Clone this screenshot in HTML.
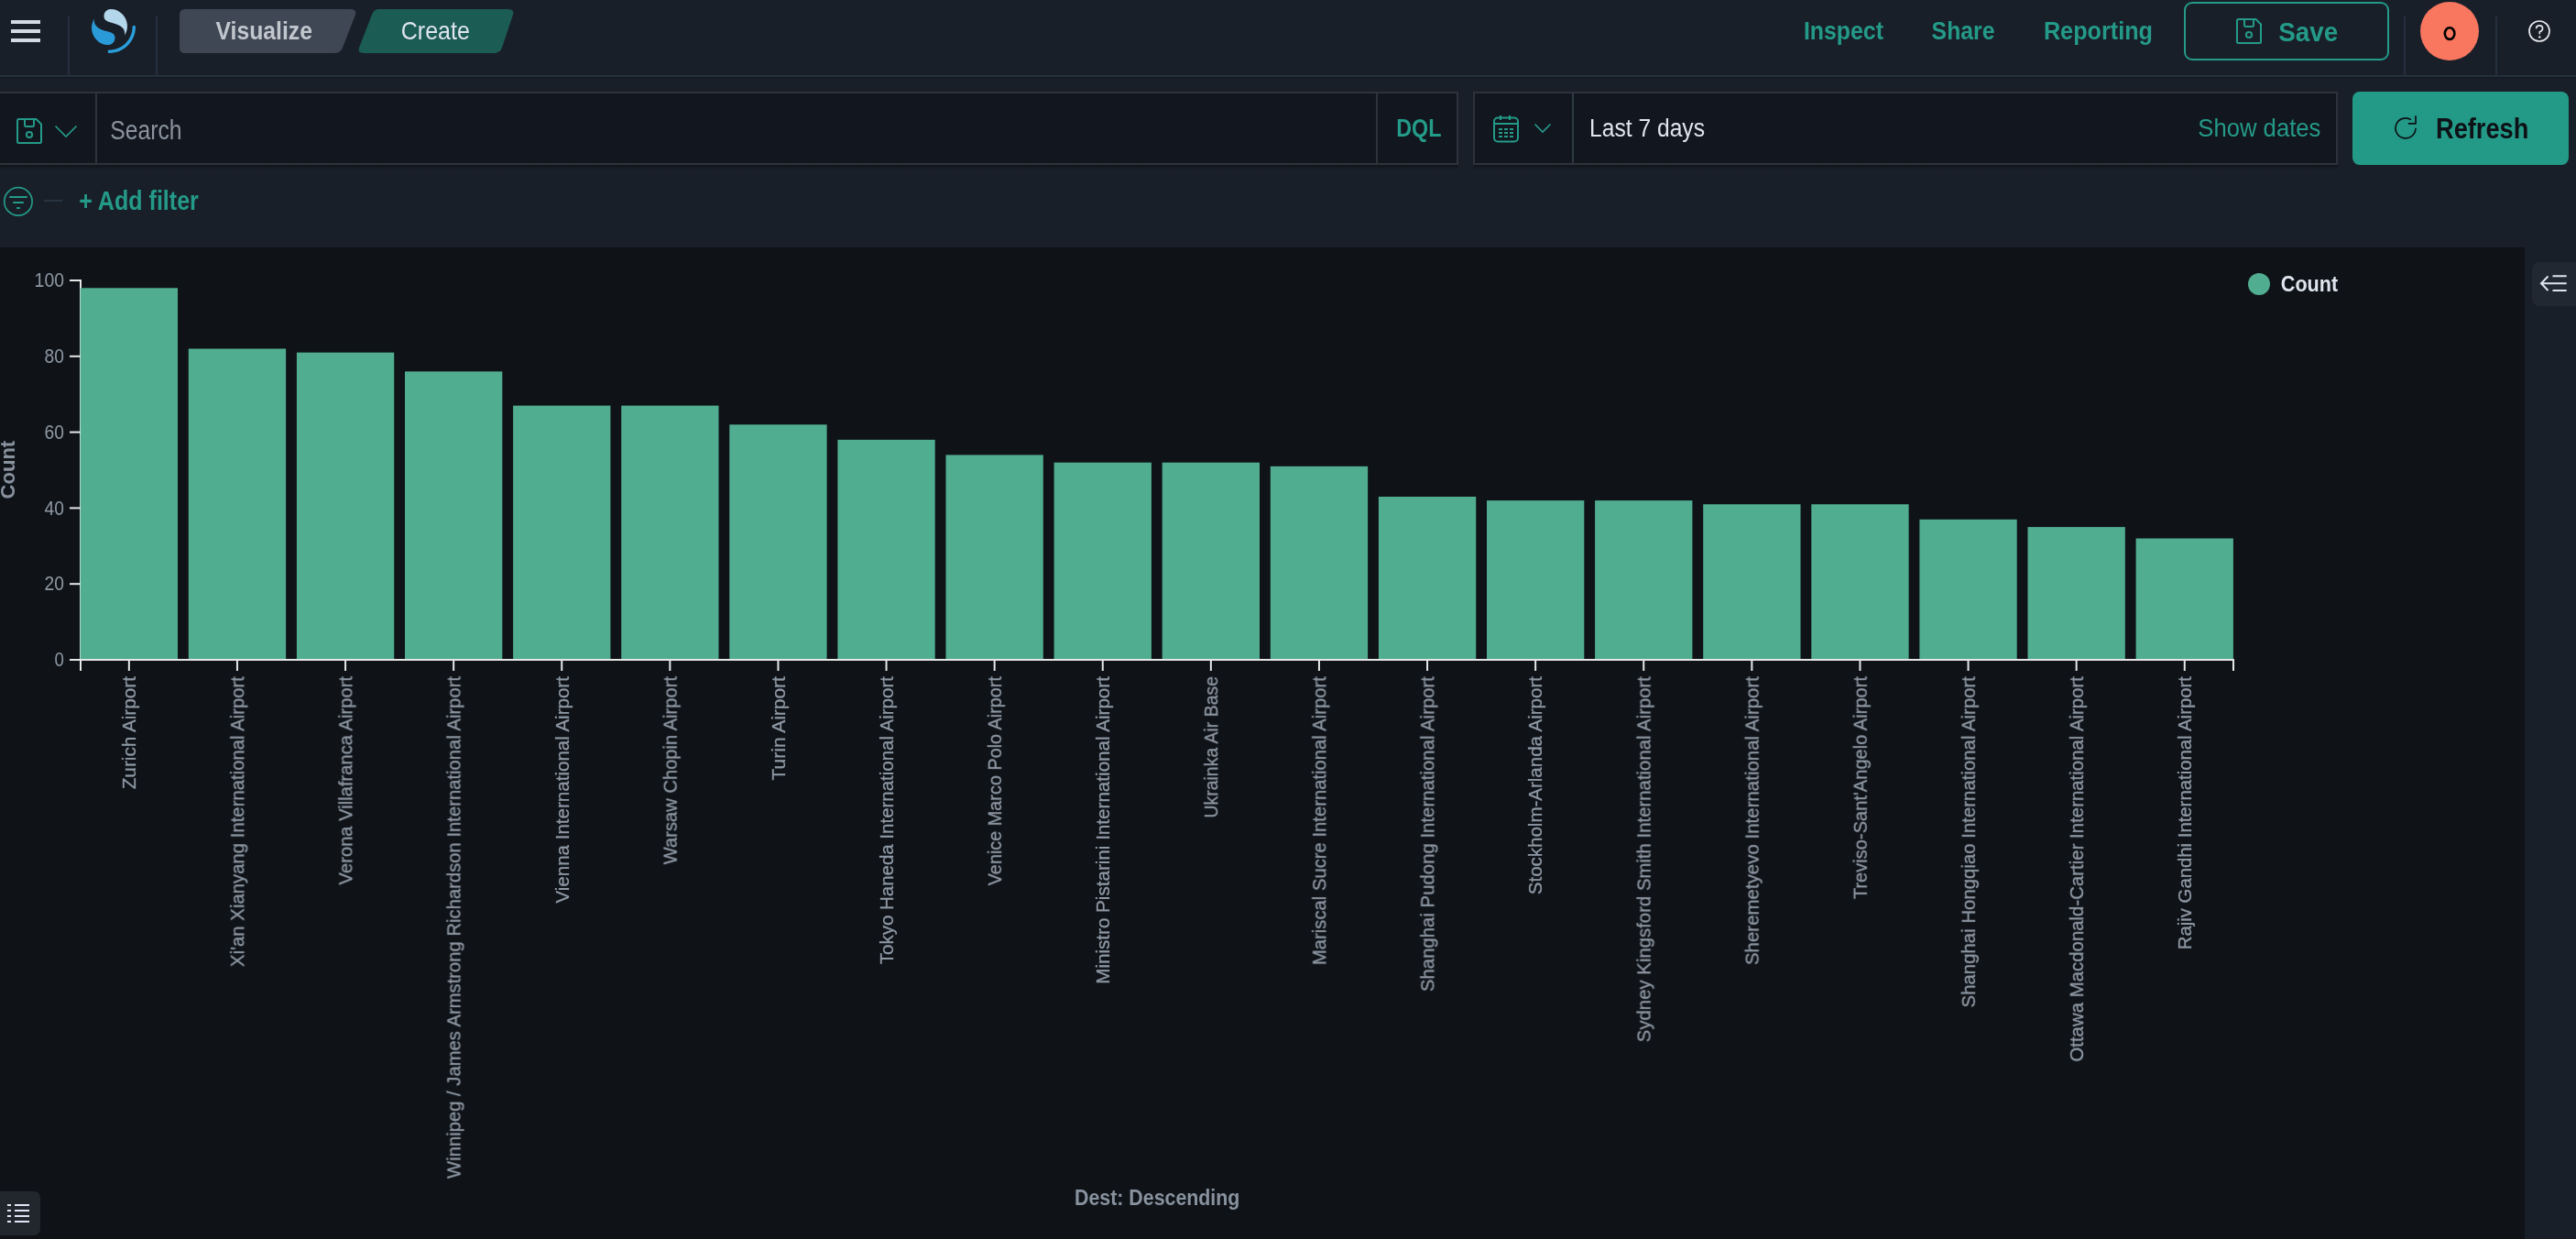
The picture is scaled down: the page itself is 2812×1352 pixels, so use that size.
<!DOCTYPE html>
<html><head><meta charset="utf-8"><title>Visualize</title>
<style>html,body{margin:0;padding:0;background:#0f1318;width:2812px;height:1352px;overflow:hidden;font-family:"Liberation Sans", sans-serif;}</style>
</head><body>
<svg width="2812" height="1352" viewBox="0 0 2812 1352" style="display:block;will-change:transform" font-family='"Liberation Sans", sans-serif'><rect x="0" y="0" width="2812" height="82" fill="#191f29"/>
<rect x="0" y="82" width="2812" height="2" fill="#25303e"/>
<rect x="0" y="84" width="2812" height="186" fill="#191f29"/>
<rect x="0" y="84" width="2812" height="1.3" fill="#13171e"/>
<rect x="0" y="270" width="2756" height="1082" fill="#0f1318"/>
<rect x="2756" y="270" width="56" height="1082" fill="#191f29"/>
<rect x="12" y="22" width="32" height="4" fill="#d4dae5"/>
<rect x="12" y="32" width="32" height="4" fill="#d4dae5"/>
<rect x="12" y="42" width="32" height="4" fill="#d4dae5"/>
<rect x="74" y="18" width="2" height="64" fill="#25303e"/>
<rect x="170" y="18" width="2" height="64" fill="#25303e"/>
<g transform="translate(100,10) scale(0.75)"><path fill="#2a9fdc" d="M61.7374 23.5C60.4878 23.5 59.4748 24.513 59.4748 25.7626C59.4748 44.3813 44.3813 59.4748 25.7626 59.4748C24.513 59.4748 23.5 60.4878 23.5 61.7374C23.5 62.987 24.513 64 25.7626 64C46.8805 64 64 46.8805 64 25.7626C64 24.513 62.987 23.5 61.7374 23.5Z"/><path fill="#b3d6ea" d="M48.0814 38C50.2572 34.4505 52.3615 29.7178 51.9475 23.0921C51.0899 9.36725 38.6589 -1.04463 26.9206 0.0837327C22.3253 0.525465 17.6068 4.2712 18.026 10.9805C18.2082 13.8961 19.6352 15.6169 21.9544 16.9399C24.1618 18.1992 26.9978 18.9969 30.2128 19.9011C34.0962 20.9934 38.6036 22.2203 42.0677 24.7727C46.2191 27.8317 49.0572 31.3774 48.0814 38Z"/><path fill="#2a9bd8" d="M3.91861 14C1.74276 17.5495 -0.361506 22.2822 0.0524931 28.9079C0.910072 42.6327 13.3411 53.0446 25.0794 51.9163C29.6747 51.4745 34.3932 47.7288 33.974 41.0195C33.7918 38.1039 32.3647 36.3831 30.0456 35.0601C27.8382 33.8008 25.0022 33.0031 21.7872 32.0989C17.9038 31.0066 13.3964 29.7797 9.93226 27.2273C5.78088 24.1683 2.94279 20.6226 3.91861 14Z"/></g>
<path d="M202 10 H382 Q390 10 388 16 L374 52 Q372 58 364 58 H202 Q196 58 196 52 V16 Q196 10 202 10Z" fill="#3f4754"/>
<path d="M413 10 H554 Q562 10 560 16 L548 52 Q546 58 538 58 H398 Q390 58 392 52 L406 16 Q408 10 413 10Z" fill="#1b5c55"/>
<text x="235.5" y="43.2" font-size="28.50" fill="#c2c7ce" font-weight="700" text-anchor="start" textLength="105.5" lengthAdjust="spacingAndGlyphs">Visualize</text>
<text x="437.8" y="43.2" font-size="28.50" fill="#dfe5ef" text-anchor="start" textLength="75.0" lengthAdjust="spacingAndGlyphs">Create</text>
<text x="1968.9" y="42.8" font-size="26.80" fill="#249a88" font-weight="700" text-anchor="start" textLength="87.1" lengthAdjust="spacingAndGlyphs">Inspect</text>
<text x="2108.6" y="42.8" font-size="26.80" fill="#249a88" font-weight="700" text-anchor="start" textLength="68.9" lengthAdjust="spacingAndGlyphs">Share</text>
<text x="2230.9" y="42.8" font-size="26.80" fill="#249a88" font-weight="700" text-anchor="start" textLength="119.1" lengthAdjust="spacingAndGlyphs">Reporting</text>
<rect x="2385" y="3" width="222" height="62" rx="8" fill="none" stroke="#249a88" stroke-width="2"/>
<g transform="translate(2441,20)" fill="none" stroke="#249a88" stroke-width="2" stroke-linejoin="round"><path d="M2.5 1 H21.5 L27 6.5 V25.5 Q27 27 25.5 27 H2.5 Q1 27 1 25.5 V2.5 Q1 1 2.5 1 Z"/><path d="M9 1 V7.5 Q9 9 10.5 9 H17.5 Q19 9 19 7.5 V1"/><circle cx="14" cy="18" r="3.1"/></g>
<text x="2487.3" y="45.0" font-size="30.00" fill="#249a88" font-weight="700" text-anchor="start" textLength="64.9" lengthAdjust="spacingAndGlyphs">Save</text>
<rect x="2624" y="18" width="2" height="64" fill="#25303e"/>
<circle cx="2674" cy="34" r="32" fill="#f9765f"/>
<ellipse cx="2674.1" cy="36.6" rx="5.3" ry="6.3" fill="none" stroke="#000" stroke-width="2.6"/>
<rect x="2724" y="18" width="2" height="64" fill="#25303e"/>
<circle cx="2772" cy="34" r="11" fill="none" stroke="#e6e9ef" stroke-width="1.7"/>
<path d="M2768.6 31.2 Q2768.6 27.9 2772.1 27.9 Q2775.6 27.9 2775.6 31.2 Q2775.6 33.4 2772.3 34.8 V37.3" fill="none" stroke="#e6e9ef" stroke-width="1.6"/>
<circle cx="2772.3" cy="40.4" r="1.2" fill="#e6e9ef"/>
<rect x="-1" y="101" width="1592" height="78" fill="#12161e" stroke="#2e333b" stroke-width="2"/>
<rect x="104" y="101" width="2" height="78" fill="#2e333b"/>
<rect x="1502" y="101" width="2" height="78" fill="#2e333b"/>
<g transform="translate(18,129)" fill="none" stroke="#249a88" stroke-width="2" stroke-linejoin="round"><path d="M2.5 1 H21.5 L27 6.5 V25.5 Q27 27 25.5 27 H2.5 Q1 27 1 25.5 V2.5 Q1 1 2.5 1 Z"/><path d="M9 1 V7.5 Q9 9 10.5 9 H17.5 Q19 9 19 7.5 V1"/><circle cx="14" cy="18" r="3.1"/></g>
<path d="M60.5 137.5 L72 149 L83.5 137.5" fill="none" stroke="#249a88" stroke-width="1.7"/>
<text x="120.3" y="152.2" font-size="28.60" fill="#8a939e" text-anchor="start" textLength="78.3" lengthAdjust="spacingAndGlyphs">Search</text>
<text x="1524.2" y="149.4" font-size="27.50" fill="#249a88" font-weight="700" text-anchor="start" textLength="49.2" lengthAdjust="spacingAndGlyphs">DQL</text>
<defs><linearGradient id="sh" x1="0" y1="0" x2="0" y2="1"><stop offset="0" stop-color="#0b0e13" stop-opacity="0.6"/><stop offset="1" stop-color="#0b0e13" stop-opacity="0"/></linearGradient></defs>
<rect x="0" y="180" width="1592" height="5" fill="url(#sh)"/>
<rect x="1608" y="180" width="944" height="5" fill="url(#sh)"/>
<rect x="1609" y="101" width="942" height="78" fill="#12161e" stroke="#2e333b" stroke-width="2"/>
<rect x="1716" y="102" width="2" height="76" fill="#2b3a44"/>
<g transform="translate(1630,126)" fill="none" stroke="#249a88" stroke-width="2"><rect x="1" y="2.5" width="26" height="26" rx="4"/><path d="M1 9 H27 M8 0 V5 M18 0 V5"/></g>
<rect x="1636" y="140" width="4" height="2" fill="#249a88"/>
<rect x="1642" y="140" width="4" height="2" fill="#249a88"/>
<rect x="1648" y="140" width="4" height="2" fill="#249a88"/>
<rect x="1636" y="144" width="4" height="2" fill="#249a88"/>
<rect x="1642" y="144" width="4" height="2" fill="#249a88"/>
<rect x="1648" y="144" width="4" height="2" fill="#249a88"/>
<rect x="1636" y="148" width="4" height="2" fill="#249a88"/>
<rect x="1642" y="148" width="4" height="2" fill="#249a88"/>
<rect x="1648" y="148" width="4" height="2" fill="#249a88"/>
<path d="M1675.5 135.5 L1684 144 L1692.5 135.5" fill="none" stroke="#249a88" stroke-width="1.7"/>
<text x="1735.0" y="149.3" font-size="28.20" fill="#dfe5ef" text-anchor="start" textLength="126.0" lengthAdjust="spacingAndGlyphs">Last 7 days</text>
<text x="2399.3" y="148.7" font-size="28.00" fill="#249a88" text-anchor="start" textLength="134.1" lengthAdjust="spacingAndGlyphs">Show dates</text>
<rect x="2568" y="100" width="236" height="80" rx="8" fill="#239a87"/>
<path d="M2637 139.8 A11 11 0 1 1 2632 130.6" fill="none" stroke="#0e1116" stroke-width="1.7"/>
<path d="M2637 126.3 V134.8 H2628.8" fill="none" stroke="#0e1116" stroke-width="1.7"/>
<text x="2659.0" y="151.2" font-size="31.00" fill="#0e1116" font-weight="700" text-anchor="start" textLength="101.3" lengthAdjust="spacingAndGlyphs">Refresh</text>
<circle cx="19.9" cy="219.9" r="15.2" fill="none" stroke="#249a88" stroke-width="1.7"/>
<path d="M10.2 215 H29.7 M14.2 221 H25.8 M18.1 227 H21.8" fill="none" stroke="#249a88" stroke-width="2"/>
<rect x="48" y="218" width="20" height="2" fill="#283340"/>
<text x="86.2" y="229.4" font-size="29.30" fill="#249a88" font-weight="700" text-anchor="start" textLength="130.7" lengthAdjust="spacingAndGlyphs">+ Add filter</text>
<rect x="87" y="305" width="2" height="416" fill="#e6e6e6"/>
<rect x="87.70" y="314.28" width="106.30" height="404.72" fill="#51ad90"/>
<rect x="205.80" y="380.52" width="106.30" height="338.48" fill="#51ad90"/>
<rect x="323.90" y="384.66" width="106.30" height="334.34" fill="#51ad90"/>
<rect x="442.00" y="405.36" width="106.30" height="313.64" fill="#51ad90"/>
<rect x="560.10" y="442.62" width="106.30" height="276.38" fill="#51ad90"/>
<rect x="678.20" y="442.62" width="106.30" height="276.38" fill="#51ad90"/>
<rect x="796.30" y="463.32" width="106.30" height="255.68" fill="#51ad90"/>
<rect x="914.40" y="479.88" width="106.30" height="239.12" fill="#51ad90"/>
<rect x="1032.50" y="496.44" width="106.30" height="222.56" fill="#51ad90"/>
<rect x="1150.60" y="504.72" width="106.30" height="214.28" fill="#51ad90"/>
<rect x="1268.70" y="504.72" width="106.30" height="214.28" fill="#51ad90"/>
<rect x="1386.80" y="508.86" width="106.30" height="210.14" fill="#51ad90"/>
<rect x="1504.90" y="541.98" width="106.30" height="177.02" fill="#51ad90"/>
<rect x="1623.00" y="546.12" width="106.30" height="172.88" fill="#51ad90"/>
<rect x="1741.10" y="546.12" width="106.30" height="172.88" fill="#51ad90"/>
<rect x="1859.20" y="550.26" width="106.30" height="168.74" fill="#51ad90"/>
<rect x="1977.30" y="550.26" width="106.30" height="168.74" fill="#51ad90"/>
<rect x="2095.40" y="566.82" width="106.30" height="152.18" fill="#51ad90"/>
<rect x="2213.50" y="575.10" width="106.30" height="143.90" fill="#51ad90"/>
<rect x="2331.60" y="587.52" width="106.30" height="131.48" fill="#51ad90"/>
<rect x="87" y="719" width="2352" height="2" fill="#e6e6e6"/>
<rect x="76" y="719.00" width="12" height="2" fill="#e6e6e6"/>
<text x="70.0" y="727.2" font-size="21.20" fill="#8e98a4" text-anchor="end" textLength="10.4" lengthAdjust="spacingAndGlyphs">0</text>
<rect x="76" y="636.20" width="12" height="2" fill="#e6e6e6"/>
<text x="70.0" y="644.4" font-size="21.20" fill="#8e98a4" text-anchor="end" textLength="21.4" lengthAdjust="spacingAndGlyphs">20</text>
<rect x="76" y="553.40" width="12" height="2" fill="#e6e6e6"/>
<text x="70.0" y="561.6" font-size="21.20" fill="#8e98a4" text-anchor="end" textLength="21.4" lengthAdjust="spacingAndGlyphs">40</text>
<rect x="76" y="470.60" width="12" height="2" fill="#e6e6e6"/>
<text x="70.0" y="478.8" font-size="21.20" fill="#8e98a4" text-anchor="end" textLength="21.4" lengthAdjust="spacingAndGlyphs">60</text>
<rect x="76" y="387.80" width="12" height="2" fill="#e6e6e6"/>
<text x="70.0" y="396.0" font-size="21.20" fill="#8e98a4" text-anchor="end" textLength="21.4" lengthAdjust="spacingAndGlyphs">80</text>
<rect x="76" y="305.00" width="12" height="2" fill="#e6e6e6"/>
<text x="70.0" y="313.2" font-size="21.20" fill="#8e98a4" text-anchor="end" textLength="32.4" lengthAdjust="spacingAndGlyphs">100</text>
<rect x="87" y="720" width="2" height="12" fill="#e6e6e6"/>
<rect x="2437" y="720" width="2" height="12" fill="#e6e6e6"/>
<rect x="139.85" y="720" width="2" height="12" fill="#e6e6e6"/>
<text transform="translate(148.15,738.1) rotate(-90)" font-size="20.9" fill="#8e98a4" text-anchor="end" textLength="123.2" lengthAdjust="spacingAndGlyphs" stroke="#8e98a4" stroke-width="0.3">Zurich Airport</text>
<rect x="257.95" y="720" width="2" height="12" fill="#e6e6e6"/>
<text transform="translate(266.25,738.1) rotate(-90)" font-size="20.9" fill="#8e98a4" text-anchor="end" textLength="316.9" lengthAdjust="spacingAndGlyphs" stroke="#8e98a4" stroke-width="0.3">Xi&#39;an Xianyang International Airport</text>
<rect x="376.05" y="720" width="2" height="12" fill="#e6e6e6"/>
<text transform="translate(384.35,738.1) rotate(-90)" font-size="20.9" fill="#8e98a4" text-anchor="end" textLength="227.4" lengthAdjust="spacingAndGlyphs" stroke="#8e98a4" stroke-width="0.3">Verona Villafranca Airport</text>
<rect x="494.15" y="720" width="2" height="12" fill="#e6e6e6"/>
<text transform="translate(502.45,738.1) rotate(-90)" font-size="20.9" fill="#8e98a4" text-anchor="end" textLength="547.9" lengthAdjust="spacingAndGlyphs" stroke="#8e98a4" stroke-width="0.3">Winnipeg / James Armstrong Richardson International Airport</text>
<rect x="612.25" y="720" width="2" height="12" fill="#e6e6e6"/>
<text transform="translate(620.55,738.1) rotate(-90)" font-size="20.9" fill="#8e98a4" text-anchor="end" textLength="247.5" lengthAdjust="spacingAndGlyphs" stroke="#8e98a4" stroke-width="0.3">Vienna International Airport</text>
<rect x="730.35" y="720" width="2" height="12" fill="#e6e6e6"/>
<text transform="translate(738.65,738.1) rotate(-90)" font-size="20.9" fill="#8e98a4" text-anchor="end" textLength="205.2" lengthAdjust="spacingAndGlyphs" stroke="#8e98a4" stroke-width="0.3">Warsaw Chopin Airport</text>
<rect x="848.45" y="720" width="2" height="12" fill="#e6e6e6"/>
<text transform="translate(856.75,738.1) rotate(-90)" font-size="20.9" fill="#8e98a4" text-anchor="end" textLength="113.3" lengthAdjust="spacingAndGlyphs" stroke="#8e98a4" stroke-width="0.3">Turin Airport</text>
<rect x="966.55" y="720" width="2" height="12" fill="#e6e6e6"/>
<text transform="translate(974.85,738.1) rotate(-90)" font-size="20.9" fill="#8e98a4" text-anchor="end" textLength="314.1" lengthAdjust="spacingAndGlyphs" stroke="#8e98a4" stroke-width="0.3">Tokyo Haneda International Airport</text>
<rect x="1084.65" y="720" width="2" height="12" fill="#e6e6e6"/>
<text transform="translate(1092.95,738.1) rotate(-90)" font-size="20.9" fill="#8e98a4" text-anchor="end" textLength="228.3" lengthAdjust="spacingAndGlyphs" stroke="#8e98a4" stroke-width="0.3">Venice Marco Polo Airport</text>
<rect x="1202.75" y="720" width="2" height="12" fill="#e6e6e6"/>
<text transform="translate(1211.05,738.1) rotate(-90)" font-size="20.9" fill="#8e98a4" text-anchor="end" textLength="335.7" lengthAdjust="spacingAndGlyphs" stroke="#8e98a4" stroke-width="0.3">Ministro Pistarini International Airport</text>
<rect x="1320.85" y="720" width="2" height="12" fill="#e6e6e6"/>
<text transform="translate(1329.15,738.1) rotate(-90)" font-size="20.9" fill="#8e98a4" text-anchor="end" textLength="154.5" lengthAdjust="spacingAndGlyphs" stroke="#8e98a4" stroke-width="0.3">Ukrainka Air Base</text>
<rect x="1438.95" y="720" width="2" height="12" fill="#e6e6e6"/>
<text transform="translate(1447.25,738.1) rotate(-90)" font-size="20.9" fill="#8e98a4" text-anchor="end" textLength="315.1" lengthAdjust="spacingAndGlyphs" stroke="#8e98a4" stroke-width="0.3">Mariscal Sucre International Airport</text>
<rect x="1557.05" y="720" width="2" height="12" fill="#e6e6e6"/>
<text transform="translate(1565.35,738.1) rotate(-90)" font-size="20.9" fill="#8e98a4" text-anchor="end" textLength="344.1" lengthAdjust="spacingAndGlyphs" stroke="#8e98a4" stroke-width="0.3">Shanghai Pudong International Airport</text>
<rect x="1675.15" y="720" width="2" height="12" fill="#e6e6e6"/>
<text transform="translate(1683.45,738.1) rotate(-90)" font-size="20.9" fill="#8e98a4" text-anchor="end" textLength="238.1" lengthAdjust="spacingAndGlyphs" stroke="#8e98a4" stroke-width="0.3">Stockholm-Arlanda Airport</text>
<rect x="1793.25" y="720" width="2" height="12" fill="#e6e6e6"/>
<text transform="translate(1801.55,738.1) rotate(-90)" font-size="20.9" fill="#8e98a4" text-anchor="end" textLength="399.2" lengthAdjust="spacingAndGlyphs" stroke="#8e98a4" stroke-width="0.3">Sydney Kingsford Smith International Airport</text>
<rect x="1911.35" y="720" width="2" height="12" fill="#e6e6e6"/>
<text transform="translate(1919.65,738.1) rotate(-90)" font-size="20.9" fill="#8e98a4" text-anchor="end" textLength="315.1" lengthAdjust="spacingAndGlyphs" stroke="#8e98a4" stroke-width="0.3">Sheremetyevo International Airport</text>
<rect x="2029.45" y="720" width="2" height="12" fill="#e6e6e6"/>
<text transform="translate(2037.75,738.1) rotate(-90)" font-size="20.9" fill="#8e98a4" text-anchor="end" textLength="243.1" lengthAdjust="spacingAndGlyphs" stroke="#8e98a4" stroke-width="0.3">Treviso-Sant&#39;Angelo Airport</text>
<rect x="2147.55" y="720" width="2" height="12" fill="#e6e6e6"/>
<text transform="translate(2155.85,738.1) rotate(-90)" font-size="20.9" fill="#8e98a4" text-anchor="end" textLength="361.4" lengthAdjust="spacingAndGlyphs" stroke="#8e98a4" stroke-width="0.3">Shanghai Hongqiao International Airport</text>
<rect x="2265.65" y="720" width="2" height="12" fill="#e6e6e6"/>
<text transform="translate(2273.95,738.1) rotate(-90)" font-size="20.9" fill="#8e98a4" text-anchor="end" textLength="420.6" lengthAdjust="spacingAndGlyphs" stroke="#8e98a4" stroke-width="0.3">Ottawa Macdonald-Cartier International Airport</text>
<rect x="2383.75" y="720" width="2" height="12" fill="#e6e6e6"/>
<text transform="translate(2392.05,738.1) rotate(-90)" font-size="20.9" fill="#8e98a4" text-anchor="end" textLength="298.1" lengthAdjust="spacingAndGlyphs" stroke="#8e98a4" stroke-width="0.3">Rajiv Gandhi International Airport</text>
<text transform="translate(15.5,512.6) rotate(-90)" font-size="22.5" font-weight="700" fill="#88929e" text-anchor="middle" textLength="63.6" lengthAdjust="spacingAndGlyphs">Count</text>
<text x="1173.0" y="1315.1" font-size="23.30" fill="#88929e" font-weight="700" text-anchor="start" textLength="180.4" lengthAdjust="spacingAndGlyphs">Dest: Descending</text>
<circle cx="2466" cy="310" r="12" fill="#51ad90"/>
<text x="2489.8" y="318.3" font-size="24.10" fill="#dfe5ef" font-weight="700" text-anchor="start" textLength="62.4" lengthAdjust="spacingAndGlyphs">Count</text>
<rect x="2764" y="286" width="60" height="48" rx="8" fill="#222832"/>
<path d="M2786.5 301.2 H2801.7 M2774 309.3 H2801.7 M2786.5 317.1 H2801.7 M2781.5 301.5 L2774 309.3 L2781.5 317" fill="none" stroke="#dfe5ef" stroke-width="2"/>
<rect x="-8" y="1300" width="52" height="48" rx="7" fill="#22272e"/>
<rect x="8" y="1314" width="4" height="2" fill="#e0e6f5"/>
<rect x="16" y="1314" width="16" height="2" fill="#e0e6f5"/>
<rect x="8" y="1320" width="4" height="2" fill="#e0e6f5"/>
<rect x="16" y="1320" width="16" height="2" fill="#e0e6f5"/>
<rect x="8" y="1326" width="4" height="2" fill="#e0e6f5"/>
<rect x="16" y="1326" width="16" height="2" fill="#e0e6f5"/>
<rect x="8" y="1332" width="4" height="2" fill="#e0e6f5"/>
<rect x="16" y="1332" width="16" height="2" fill="#e0e6f5"/></svg>
</body></html>
